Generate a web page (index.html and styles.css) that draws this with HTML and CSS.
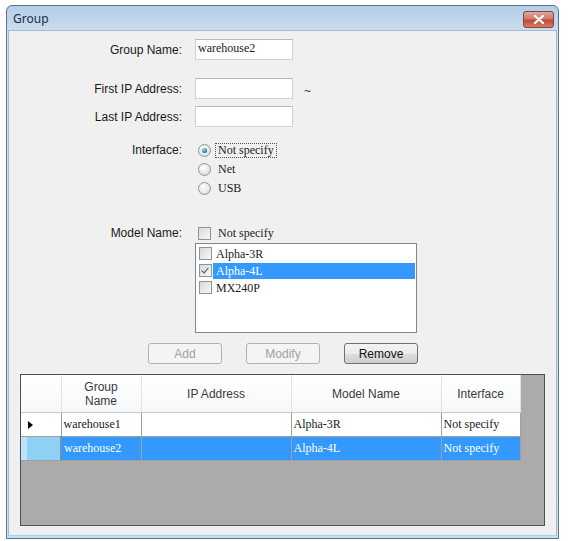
FILE: index.html
```html
<!DOCTYPE html>
<html lang="en">
<head>
    <meta charset="UTF-8" />
    <title>Group</title>
    <link rel="stylesheet" href="styles.css">
</head>
<body>

<div class="window">
    <!-- Title bar -->
    <div class="titlebar">
        <span class="title">Group</span>
        <span class="close-btn">
            <svg width="12" height="9" viewBox="0 0 12 9">
                <path d="M2 1 L10 8 M10 1 L2 8" stroke="#fff" stroke-width="2.2" stroke-linecap="round"/>
            </svg>
        </span>
    </div>

    <div class="client">
        <div class="row row-name">
            <label class="label">Group Name:</label>
            <div class="textbox">warehouse2</div>
        </div>

        <div class="row row-first">
            <label class="label">First IP Address:</label>
            <div class="textbox"></div>
            <span class="tilde">~</span>
        </div>

        <div class="row row-last">
            <label class="label">Last IP Address:</label>
            <div class="textbox"></div>
        </div>

        <div class="row row-iface">
            <label class="label">Interface:</label>
            <div class="radio-group">
                <div class="radio-item"><span class="radio checked"></span><span class="opt focused">Not specify</span></div>
                <div class="radio-item"><span class="radio"></span><span class="opt">Net</span></div>
                <div class="radio-item"><span class="radio"></span><span class="opt">USB</span></div>
            </div>
        </div>

        <div class="row row-model">
            <label class="label">Model Name:</label>
            <div class="check-item"><span class="checkbox"></span><span class="opt">Not specify</span></div>
        </div>

        <div class="row row-list">
            <div class="label"></div>
            <div class="listbox">
                <div class="list-item"><span class="checkbox"></span><span class="item-text">Alpha-3R</span></div>
                <div class="list-item selected"><span class="checkbox checked"></span><span class="item-text">Alpha-4L</span></div>
                <div class="list-item"><span class="checkbox"></span><span class="item-text">MX240P</span></div>
            </div>
        </div>

        <div class="buttons">
            <button class="btn" disabled>Add</button>
            <button class="btn" disabled>Modify</button>
            <button class="btn">Remove</button>
        </div>

        <!-- Group list -->
        <div class="grid">
            <table>
                <colgroup>
                    <col style="width:40px">
                    <col style="width:80px">
                    <col style="width:150px">
                    <col style="width:150px">
                    <col style="width:79px">
                </colgroup>
                <thead>
                    <tr>
                        <th></th>
                        <th>Group<br>Name</th>
                        <th>IP Address</th>
                        <th>Model Name</th>
                        <th>Interface</th>
                    </tr>
                </thead>
                <tbody>
                    <tr>
                        <td class="row-head"><span class="arrow"></span></td>
                        <td>warehouse1</td>
                        <td></td>
                        <td>Alpha-3R</td>
                        <td>Not specify</td>
                    </tr>
                    <tr class="selected">
                        <td class="row-head"></td>
                        <td>warehouse2</td>
                        <td></td>
                        <td>Alpha-4L</td>
                        <td>Not specify</td>
                    </tr>
                </tbody>
            </table>
        </div>
    </div>
</div>

</body>
</html>
```

FILE: styles.css
```css
/* Dialog frame */
body {
    margin: 0;
    background-color: #ffffff;
    font-family: "Liberation Sans", Arial, sans-serif;
    font-size: 12px;
    color: #1a1a1a;
}

.window {
    margin: 5px 0 0 6px;
    width: 549px;
    height: 530px;
    border: 1px solid #5f7286;
    border-radius: 6px 6px 0 0;
    background: linear-gradient(#b4cde8, #cfe0f2 30px, #c4e4f4);
    padding: 0 1px 2px 1px;
    display: flex;
    flex-direction: column;
}

.titlebar {
    height: 24px;
    display: flex;
    align-items: center;
    justify-content: space-between;
    padding: 0 3px 0 5px;
}

.title {
    font-family: "Noto Sans", "Open Sans", sans-serif;
    font-size: 12px;
    color: #1c2f44;
    margin-top: 1px;
}

.close-btn {
    width: 29px;
    height: 15px;
    border: 1px solid #85433a;
    border-radius: 3px;
    background: linear-gradient(#e0a89c, #cf7a6c 45%, #c04a38 55%, #d08068);
    display: flex;
    align-items: center;
    justify-content: center;
    margin-top: 2px;
}

.client {
    flex: 1;
    background-color: #f0f0f0;
    border: 1px solid #a8b8c8;
    border-bottom-color: #9fd6ee;
    padding-top: 8px;
}

/* Form rows */
.row {
    display: flex;
    align-items: center;
}

.label {
    width: 173px;
    margin-right: 13px;
    text-align: right;
    flex-shrink: 0;
}

.textbox {
    width: 94px;
    height: 19px;
    background-color: #ffffff;
    border: 1px solid #d0d0d0;
    border-top-color: #b8b8b8;
    font-family: "Liberation Serif", serif;
    font-size: 12px;
    line-height: 17px;
    padding-left: 2px;
    box-sizing: content-box;
}

.row-name {
    height: 21px;
}

.row-first {
    height: 21px;
    margin-top: 18px;
}

.row-last {
    height: 21px;
    margin-top: 7px;
}

.tilde {
    margin-left: 11px;
    margin-top: 4px;
    color: #333;
}

.row-iface {
    margin-top: 14px;
    align-items: flex-start;
}

.row-iface .label {
    line-height: 19px;
}

.radio-group {
    display: flex;
    flex-direction: column;
}

.radio-item,
.check-item {
    height: 19px;
    display: flex;
    align-items: center;
}

.radio {
    width: 11px;
    height: 11px;
    border: 1px solid #8f9296;
    border-radius: 50%;
    background: radial-gradient(circle at 40% 35%, #ffffff, #e2e2e2 70%, #cfcfcf);
    margin-left: 3px;
    margin-right: 4px;
    position: relative;
}

.radio.checked::after {
    content: "";
    position: absolute;
    left: 3px;
    top: 3px;
    width: 5px;
    height: 5px;
    border-radius: 50%;
    background: radial-gradient(circle at 40% 35%, #9fdcff, #1f6fb0 70%, #0d3f70);
}

.opt {
    font-family: "Liberation Serif", serif;
    font-size: 12px;
    padding: 0 2px;
    line-height: 13px;
    border: 1px dotted transparent;
}

.opt.focused {
    border-color: #555;
}

.row-model {
    margin-top: 26px;
    height: 18px;
}

.checkbox {
    width: 11px;
    height: 11px;
    border: 1px solid #8f9296;
    background: linear-gradient(135deg, #d8d8d8, #f8f8f8);
    margin-left: 3px;
    margin-right: 4px;
    flex-shrink: 0;
    position: relative;
}

.checkbox.checked::after {
    content: "";
    position: absolute;
    left: 3px;
    top: 1px;
    width: 3px;
    height: 6px;
    border: solid #34508f;
    border-width: 0 1.5px 1.5px 0;
    transform: rotate(40deg);
}

.row-list {
    margin-top: 1px;
    align-items: flex-start;
}

.listbox {
    width: 220px;
    height: 87px;
    background-color: #ffffff;
    border: 1px solid #828790;
    padding-top: 1px;
    box-sizing: content-box;
}

.list-item {
    height: 17px;
    display: flex;
    align-items: center;
}

.item-text {
    font-family: "Liberation Serif", serif;
    font-size: 12px;
    flex: 1;
    height: 16px;
    line-height: 16px;
    padding-left: 3px;
    margin-right: 1px;
}

.list-item .checkbox {
    margin-right: 1px;
}

.list-item.selected .item-text {
    background-color: #3399ff;
    color: #ffffff;
}

/* Action buttons */
.buttons {
    display: flex;
    margin: 10px 0 0 139px;
    gap: 24px;
}

.btn {
    width: 74px;
    height: 21px;
    font-family: "Liberation Sans", Arial, sans-serif;
    font-size: 12px;
    border: 1px solid #707070;
    border-radius: 3px;
    background: linear-gradient(#f3f3f3, #ebebeb 50%, #dddddd 51%, #cfcfcf);
    color: #111;
    padding: 0;
}

.btn:disabled {
    border-color: #adb2b5;
    background: #f4f4f4;
    color: #a0a0a0;
}

/* Data grid */
.grid {
    margin: 10px 11px 0 11px;
    height: 150px;
    background-color: #ababab;
    border: 1px solid #505050;
}

.grid table {
    border-collapse: collapse;
    table-layout: fixed;
    width: 499px;
}

.grid th {
    height: 37px;
    background: linear-gradient(#ffffff, #f7f8fa);
    font-weight: normal;
    color: #3a3a3a;
    border-right: 1px solid #e2e3e5;
    border-bottom: 1px solid #c8c8c8;
    padding: 0;
    line-height: 14px;
}

.grid td {
    height: 23px;
    background-color: #ffffff;
    border: 1px solid #a0a0a0;
    font-family: "Liberation Serif", serif;
    font-size: 12px;
    padding: 0 2px;
    white-space: nowrap;
    overflow: hidden;
}

.grid tr.selected td {
    background-color: #3399ff;
    color: #ffffff;
}

.grid td.row-head {
    border-left: none;
    position: relative;
}

.grid tr.selected td.row-head {
    background: linear-gradient(90deg, #bde4fa 6px, #8fd0f5 6px);
    border-right: 2px solid #6a93b0;
}

.arrow {
    display: block;
    width: 0;
    height: 0;
    margin-left: 5px;
    border-left: 5px solid #000;
    border-top: 4px solid transparent;
    border-bottom: 4px solid transparent;
}
```
